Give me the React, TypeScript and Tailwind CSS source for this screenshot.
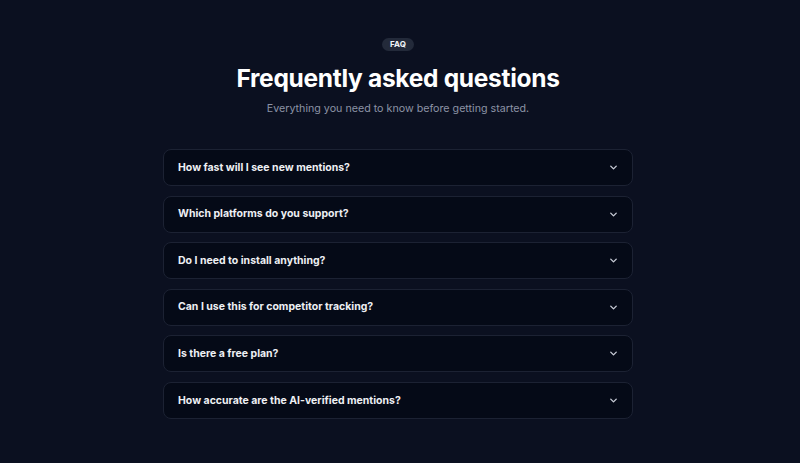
import React from "react";

const questions = [
  "How fast will I see new mentions?",
  "Which platforms do you support?",
  "Do I need to install anything?",
  "Can I use this for competitor tracking?",
  "Is there a free plan?",
  "How accurate are the AI-verified mentions?",
];

const Chevron = () => (
  <svg width="11" height="11" viewBox="0 0 24 24" fill="none" stroke="currentColor" strokeWidth="3" strokeLinecap="round" strokeLinejoin="round">
    <path d="m6 9 6 6 6-6" />
  </svg>
);

export default function App() {
  return (
    <div className="min-h-screen bg-[#0b1020] pr-[4px] font-['Inter',sans-serif] text-white">
      <div className="flex flex-col items-center pt-[38px]">
        <span className="rounded-full bg-[#232a3a] px-[8px] py-[1px] text-[8px] font-bold leading-[11px] text-slate-100">
          FAQ
        </span>
        <h2 className="mt-[12px] text-[24.5px] font-bold leading-[30px] tracking-[-0.3px]">
          Frequently asked questions
        </h2>
        <p className="mt-[8px] text-[10.7px] leading-[16px] text-[#8b93a5]">
          Everything you need to know before getting started.
        </p>
        <div className="mt-[32px] flex w-[470px] flex-col gap-[9.6px]">
          {questions.map((q) => (
            <div
              key={q}
              className="flex h-[37px] items-center justify-between rounded-[8px] border border-[#1c2233] bg-[#050a17] pl-[14px] pr-[13px]"
            >
              <span className="text-[10.5px] font-bold text-[#eef0f4]">{q}</span>
              <span className="text-[#c8ccd6]">
                <Chevron />
              </span>
            </div>
          ))}
        </div>
      </div>
    </div>
  );
}
